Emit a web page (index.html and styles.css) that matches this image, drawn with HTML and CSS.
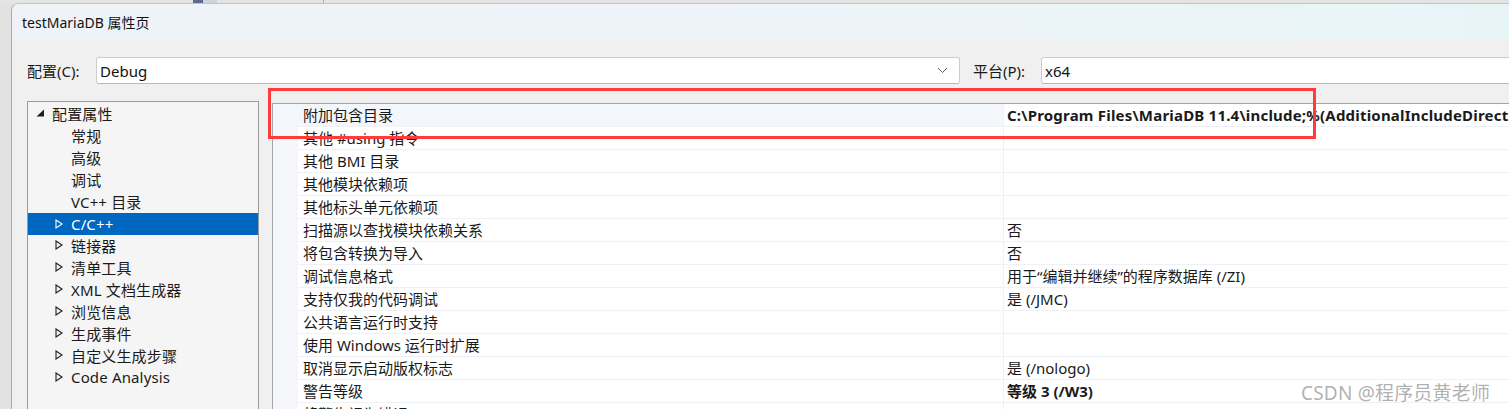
FILE: index.html
```html
<!DOCTYPE html>
<html lang="zh-CN">
<head>
<meta charset="utf-8">
<title>testMariaDB 属性页</title>
<link rel="stylesheet" href="styles.css">
</head>
<body>
<div class="screen">
  <div class="bgstrip">
    <div class="seg-a"></div>
    <div class="seg-b"></div>
    <div class="seg-c"></div>
    <div class="seg-d"></div>
  </div>
  <div class="shell">
    <div class="dialog">
      <div class="titlebar">testMariaDB 属性页</div>
      <div class="content">
        <div class="cfg">
          <span class="lbl lbl-cfg">配置(C):</span>
          <div class="combo combo-cfg">
            <span class="combo-text">Debug</span>
            <svg class="chev" width="11" height="7" viewBox="0 0 11 7"><path d="M1 1 L5.5 5.5 L10 1" fill="none" stroke="#5a5a5a" stroke-width="1"/></svg>
          </div>
          <span class="lbl lbl-plat">平台(P):</span>
          <div class="combo combo-plat">
            <span class="combo-text">x64</span>
          </div>
        </div>
        <div class="main">
          <div class="tree">
            <div class="node top"><svg class="tri" width="9" height="8" viewBox="0 0 9 8"><polygon points="8,0.5 8,7.5 0.5,7.5" fill="#1e1e1e"/></svg><span>配置属性</span></div>
            <div class="node leaf"><span>常规</span></div>
            <div class="node leaf"><span>高级</span></div>
            <div class="node leaf"><span>调试</span></div>
            <div class="node leaf"><span>VC++ 目录</span></div>
            <div class="node child sel"><svg class="otri" width="8" height="10" viewBox="0 0 8 10"><polygon points="1,1 7,5 1,9" fill="none" stroke="#ffffff" stroke-width="1.1"/></svg><span>C/C++</span></div>
            <div class="node child"><svg class="otri" width="8" height="10" viewBox="0 0 8 10"><polygon points="1,1 7,5 1,9" fill="none" stroke="#1e1e1e" stroke-width="1.1"/></svg><span>链接器</span></div>
            <div class="node child"><svg class="otri" width="8" height="10" viewBox="0 0 8 10"><polygon points="1,1 7,5 1,9" fill="none" stroke="#1e1e1e" stroke-width="1.1"/></svg><span>清单工具</span></div>
            <div class="node child"><svg class="otri" width="8" height="10" viewBox="0 0 8 10"><polygon points="1,1 7,5 1,9" fill="none" stroke="#1e1e1e" stroke-width="1.1"/></svg><span>XML 文档生成器</span></div>
            <div class="node child"><svg class="otri" width="8" height="10" viewBox="0 0 8 10"><polygon points="1,1 7,5 1,9" fill="none" stroke="#1e1e1e" stroke-width="1.1"/></svg><span>浏览信息</span></div>
            <div class="node child"><svg class="otri" width="8" height="10" viewBox="0 0 8 10"><polygon points="1,1 7,5 1,9" fill="none" stroke="#1e1e1e" stroke-width="1.1"/></svg><span>生成事件</span></div>
            <div class="node child"><svg class="otri" width="8" height="10" viewBox="0 0 8 10"><polygon points="1,1 7,5 1,9" fill="none" stroke="#1e1e1e" stroke-width="1.1"/></svg><span>自定义生成步骤</span></div>
            <div class="node child"><svg class="otri" width="8" height="10" viewBox="0 0 8 10"><polygon points="1,1 7,5 1,9" fill="none" stroke="#1e1e1e" stroke-width="1.1"/></svg><span>Code Analysis</span></div>
          </div>
          <div class="grid">
            <div class="row hot"><div class="gut"></div><div class="name">附加包含目录</div><div class="val bold wide">C:\Program Files\MariaDB 11.4\include;%(AdditionalIncludeDirectories)</div></div>
            <div class="row"><div class="gut"></div><div class="name">其他 #using 指令</div><div class="val"></div></div>
            <div class="row"><div class="gut"></div><div class="name">其他 BMI 目录</div><div class="val"></div></div>
            <div class="row"><div class="gut"></div><div class="name">其他模块依赖项</div><div class="val"></div></div>
            <div class="row"><div class="gut"></div><div class="name">其他标头单元依赖项</div><div class="val"></div></div>
            <div class="row"><div class="gut"></div><div class="name">扫描源以查找模块依赖关系</div><div class="val">否</div></div>
            <div class="row"><div class="gut"></div><div class="name">将包含转换为导入</div><div class="val">否</div></div>
            <div class="row"><div class="gut"></div><div class="name">调试信息格式</div><div class="val">用于“编辑并继续”的程序数据库 (/ZI)</div></div>
            <div class="row"><div class="gut"></div><div class="name">支持仅我的代码调试</div><div class="val">是 (/JMC)</div></div>
            <div class="row"><div class="gut"></div><div class="name">公共语言运行时支持</div><div class="val"></div></div>
            <div class="row"><div class="gut"></div><div class="name">使用 Windows 运行时扩展</div><div class="val"></div></div>
            <div class="row"><div class="gut"></div><div class="name">取消显示启动版权标志</div><div class="val">是 (/nologo)</div></div>
            <div class="row"><div class="gut"></div><div class="name">警告等级</div><div class="val bold">等级 3 (/W3)</div></div>
            <div class="row"><div class="gut"></div><div class="name">将警告视为错误</div><div class="val"></div></div>
          </div>
        </div>
      </div>
    </div>
  </div>
  <div class="redbox"></div>
  <div class="watermark">CSDN @程序员黄老师</div>
</div>
</body>
</html>
```

FILE: styles.css
```css
* { box-sizing: border-box; }
html, body { margin: 0; padding: 0; }
body {
  width: 1509px;
  height: 409px;
  overflow: hidden;
  background: #e8e8e8;
  font-family: "Noto Sans", "Noto Sans CJK SC", sans-serif;
  color: #1a1a1a;
}
.screen {
  position: relative;
  width: 1509px;
  height: 409px;
  overflow: hidden;
  display: flex;
  flex-direction: column;
}
.bgstrip {
  height: 3px;
  flex: none;
  display: flex;
  background: #e4e4e4;
}
.seg-a { width: 193px; }
.seg-b { width: 10px; background: #5d6b96; }
.seg-c { width: 14px; background: #cfd2d8; }
.seg-d { width: 107px; border-right: 1px solid #b0b0b0; }
.shell {
  flex: 1;
  display: flex;
  padding-left: 11px;
  background: linear-gradient(to right, #e2e2e2, #ececec);
}
.dialog {
  flex: 1;
  display: flex;
  flex-direction: column;
  border-top: 1px solid #c4c4c4;
  border-left: 1px solid #a9a9a9;
  border-top-left-radius: 8px;
  background: #f0f0f0;
  overflow: hidden;
}
.titlebar {
  height: 36px;
  flex: none;
  padding-left: 10px;
  display: flex;
  align-items: center;
  font-size: 14px;
  color: #111;
  background: linear-gradient(to right, #eff3f8, #edf4f8 60%, #e8f5f7);
}
.content {
  flex: 1;
  padding: 17px 0 0 15px;
  display: flex;
  flex-direction: column;
}
.cfg {
  display: flex;
  align-items: center;
  height: 27px;
  flex: none;
}
.lbl {
  font-size: 15px;
  flex: none;
  color: #1a1a1a;
}
.lbl-cfg { width: 69px; }
.lbl-plat { width: 68px; margin-left: 13px; }
.combo {
  flex: none;
  height: 27px;
  background: #ffffff;
  border: 1px solid #cdcdcd;
  border-bottom-color: #b9b9b9;
  border-radius: 3px;
  display: flex;
  align-items: center;
  padding-left: 3px;
  font-size: 15px;
  color: #111;
}
.combo-cfg { width: 864px; }
.combo-cfg .combo-text { flex: 1; }
.chev { margin-right: 11px; }
.combo-plat { width: 520px; }
.main {
  flex: 1;
  display: flex;
  margin-top: 17px;
}
.tree {
  width: 232px;
  flex: none;
  background: #f5f5f5;
  border: 1px solid #9b9b9b;
  border-bottom: none;
  padding-top: 0;
  font-size: 15px;
}
.node {
  height: 22px;
  display: flex;
  align-items: center;
  white-space: nowrap;
  color: #1a1a1a;
  letter-spacing: 0.15px;
}
.node.top { padding-left: 8px; }
.node.top .tri { margin-right: 7px; }
.node.leaf { padding-left: 43px; }
.node.child { padding-left: 27px; }
.node.child .otri { margin-right: 8px; }
.node.sel { background: #0067c0; color: #ffffff; margin-top: 1px; margin-bottom: -1px; }
.grid {
  flex: 1;
  margin-left: 13px;
  margin-top: 2px;
  background: #ffffff;
  border-top: 1px solid #a5a5a5;
  border-left: 1px solid #a5a5a5;
  font-size: 15px;
  overflow: hidden;
}
.row {
  height: 23px;
  display: flex;
  white-space: nowrap;
}
.gut {
  width: 25px;
  flex: none;
  background: #f4f6fa;
}
.name {
  width: 705px;
  flex: none;
  padding-left: 5px;
  padding-bottom: 1px;
  display: flex;
  align-items: center;
  border-bottom: 1px solid #eef1f6;
  color: #1a1a1a;
}
.val {
  flex: 1;
  min-width: 0;
  padding-left: 3px;
  padding-bottom: 1px;
  display: flex;
  align-items: center;
  border-left: 1px solid #eef0f5;
  border-bottom: 1px solid #eef1f6;
  overflow: hidden;
  color: #1a1a1a;
}
.val.bold { font-weight: 700; }
.val.wide { letter-spacing: 0.2px; }
.row.hot .gut, .row.hot .name { background: #f3f6fb; }
.redbox {
  position: absolute;
  left: 268px;
  top: 88px;
  width: 1048px;
  height: 51px;
  border: 3px solid #ff3b3b;
}
.watermark {
  position: absolute;
  left: 1301px;
  top: 378px;
  font-size: 19px;
  color: rgba(110, 110, 110, 0.55);
  white-space: nowrap;
  letter-spacing: 0.2px;
}
```
